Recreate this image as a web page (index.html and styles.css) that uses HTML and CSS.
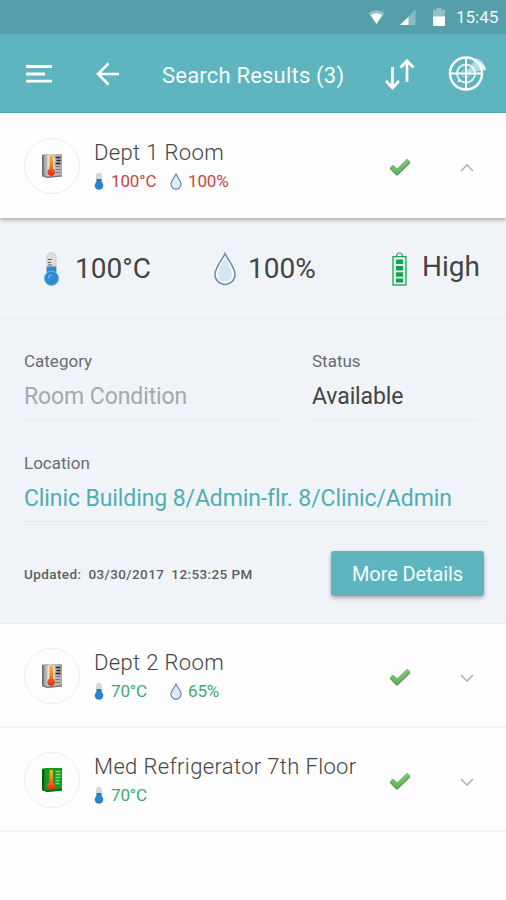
FILE: index.html
```html
<!DOCTYPE html>
<html lang="en">
<head>
  <meta charset="UTF-8">
  <meta name="viewport" content="width=device-width, initial-scale=1.0">
  <title>Search Results</title>
  <link rel="stylesheet" href="styles.css">
</head>
<body>
  <!-- Shared icons -->
  <svg class="sprite" width="0" height="0" aria-hidden="true">
    <defs>
      <linearGradient id="metal" x1="0" x2="1">
        <stop offset="0" stop-color="#8a8a8a"/>
        <stop offset="0.35" stop-color="#d2d2d2"/>
        <stop offset="1" stop-color="#a8a8a8"/>
      </linearGradient>
      <linearGradient id="heat" x1="0" y1="0" x2="0" y2="1">
        <stop offset="0" stop-color="#f9b233"/>
        <stop offset="0.5" stop-color="#f47b20"/>
        <stop offset="1" stop-color="#e02615"/>
      </linearGradient>
      <linearGradient id="tick" x1="0" y1="0" x2="0" y2="1">
        <stop offset="0" stop-color="#7fca78"/>
        <stop offset="1" stop-color="#5bbb58"/>
      </linearGradient>
      <symbol id="thermo" viewBox="0 0 17 34">
        <path d="M4 4.5a4.5 4 0 0 1 9 0V20H4z" fill="#dadcde" stroke="#c3c8cc" stroke-width="0.8"/>
        <path d="M3.700 14.500h9.600v8H3.700z" fill="#2f86cd"/>
        <circle cx="8.500" cy="26.300" r="7.200" fill="#2f8ad2" stroke="#8dbce2" stroke-width="0.8"/>
        <path d="M5 7.5h4M5 10.5h3M5 13h4" stroke="#666" stroke-width="1"/>
        <path d="M5.500 26.500a3.500 3.500 0 0 1 3-3.500" fill="none" stroke="#7db9ea" stroke-width="1.200"/>
      </symbol>
      <symbol id="thermo-small" viewBox="0 0 10 17">
        <path d="M2.500 2.500a2.500 2.300 0 0 1 5 0V9h-5z" fill="#d3d9de" stroke="#b4bdc5" stroke-width="0.5"/>
        <path d="M2.500 6h5v5h-5z" fill="#41729d"/>
        <circle cx="5" cy="12.500" r="4.300" fill="#2583cf"/>
      </symbol>
      <symbol id="drop" viewBox="0 0 22 34">
        <path d="M11 1.5C9 7 1 15 1 22.5a10 10 0 0 0 20 0C21 15 13 7 11 1.5z" fill="#f3f8fc" stroke="#5f8eb2" stroke-width="1.500"/>
        <path d="M11 6C9 11 4 17 4 22.5c0 3 2 5.500 4 6.500 6 1 9-2 10-6C18 17 13 11 11 6z" fill="#d5e5f2"/>
      </symbol>
      <symbol id="drop-small" viewBox="0 0 12 17">
        <path d="M6 1C5 4 1 7.500 1 11.200a5 5 0 0 0 10 0C11 7.500 7 4 6 1z" fill="#dce9f7" stroke="#6488b8" stroke-width="1.200"/>
        <path d="M3.200 11.500a3 3 0 0 0 3 3" fill="none" stroke="#fff" stroke-width="1"/>
      </symbol>
      <symbol id="battery" viewBox="0 0 15 34">
        <path d="M4.500 4.500C4.500 2 6 1 7.500 1s3 1 3 3.500" fill="#fff" stroke="#3a9a68" stroke-width="1.200"/>
        <rect x="1" y="4.600" width="13" height="28.400" fill="#d9f5e5" stroke="#20a25c" stroke-width="1.300"/>
        <path d="M4 7.500h7v4.500H4zM4 14h7v4.500H4zM4 20.300h7v4.500H4zM4 26.500h7v4H4z" fill="#16a150"/>
      </symbol>
      <symbol id="check" viewBox="0 0 22 18">
        <path d="M1 9.500L4 7l4.200 3.700L18 1l3 2.500v2L8.500 17.500H7.300L1 11z" fill="#62965a"/>
        <path d="M1 9.500L4 7l4.200 3.700L18 1l3 2.500L8 16z" fill="url(#tick)"/>
      </symbol>
      <symbol id="chevron" viewBox="0 0 14 8">
        <path d="M1 1l6 6 6-6" fill="none" stroke="#aaa" stroke-width="1.300"/>
      </symbol>
      <symbol id="sensor" viewBox="0 0 22 26">
        <path d="M1 2l4-1h16v22.500L6 25l-5-2z" fill="url(#metal)"/>
        <path d="M1 2l1.500-.4V23.600L1 23z" fill="#6d6d6d"/>
        <path d="M1 23l5 2 15-1.500v-1.300L6 23.500l-5-1.800z" fill="#777"/>
        <rect x="6.500" y="3" width="7" height="18" fill="#e8e4df"/>
        <path d="M14.500 4.500h5M15.500 7.500h4M14.500 10.500h5" stroke="#222" stroke-width="1.700"/>
        <path d="M14.500 13.500h4M14.500 16.500h4M14.500 19.500h4" stroke="#777" stroke-width="1.200"/>
        <path d="M8.500 3H12v12.500a3.900 3.900 0 1 1-3.500 0z" fill="url(#heat)"/>
      </symbol>
      <symbol id="fridge" viewBox="0 0 22 26">
        <path d="M1 2l4-1h16v22.500L6 25l-5-2z" fill="#159a20"/>
        <path d="M1 2l2.500-.6V24L1 23z" fill="#0b5c13"/>
        <path d="M1 23l5 2 15-1.500v-2L6 23z" fill="#0c6a15"/>
        <path d="M14.500 4.500h5M14.500 7.500h5M14.500 10.500h5M14.500 13.500h4M14.500 16.500h4" stroke="#79dc7c" stroke-width="1.400"/>
        <path d="M8.500 3H12v12.500a3.900 3.900 0 1 1-3.500 0z" fill="url(#heat)"/>
      </symbol>
    </defs>
  </svg>

  <div class="status-bar">
    <svg class="wifi" viewBox="0 0 18 16">
      <path d="M.5 4A13 13 0 0 1 17.500 4L9 15.500z" fill="#8fc2c9"/>
      <path d="M3 6.200a10 10 0 0 1 12 0L9 15.500z" fill="#fff"/>
    </svg>
    <svg class="signal" viewBox="0 0 17 17">
      <path d="M16.500 0v16.500H0z" fill="#86bbc3"/>
      <path d="M9 8v8.500H0z" fill="#fff"/>
    </svg>
    <svg class="power" viewBox="0 0 12 18">
      <path d="M3.500 0h5v2H12v7H0V2h3.500z" fill="#8fc2c9"/>
      <path d="M0 8.500h12v8.500a1 1 0 0 1-1 1H1a1 1 0 0 1-1-1z" fill="#fff"/>
    </svg>
    <span class="clock">15:45</span>
  </div>

  <header class="app-bar">
    <svg class="menu" viewBox="0 0 26 18">
      <path d="M0 1.500h26M0 9h19M0 16.200h26" stroke="#fff" stroke-width="2.800"/>
    </svg>
    <svg class="back" viewBox="0 0 24 24">
      <path d="M23 12H2M12.500 1.500L2 12l10.500 10.500" fill="none" stroke="#fff" stroke-width="2.600"/>
    </svg>
    <h1 class="title">Search Results (3)</h1>
    <svg class="sort" viewBox="0 0 30 31">
      <path d="M7.500 8v20.500M1 22l6.500 7L14 22M22 23V2.500M15.500 8.500L22 1.800l6.500 6.700" fill="none" stroke="#fff" stroke-width="2.700"/>
    </svg>
    <svg class="radar" viewBox="0 0 40 36">
      <path d="M18 18L28 3q8 2 10 12z" fill="#fff" opacity="0.500"/>
      <path d="M31 6q6 3 7 9l-5 1z" fill="#fff" opacity="0.600"/>
      <g fill="none" stroke="#fff">
        <circle cx="18" cy="18.500" r="16" stroke-width="2.400"/>
        <circle cx="18" cy="18.500" r="9" stroke-width="1.900" opacity="0.850"/>
        <circle cx="18" cy="18.500" r="4" stroke-width="1.200" opacity="0.500"/>
        <path d="M18 2.500v32M2 18.500h32" stroke-width="2"/>
      </g>
      <circle cx="11" cy="26" r="1.300" fill="#fff"/>
    </svg>
  </header>

  <main class="results">
    <div class="row row-open">
      <div class="avatar"><svg class="device"><use href="#sensor"/></svg></div>
      <div class="info">
        <div class="name">Dept 1 Room</div>
        <div class="readings alert">
          <span class="reading"><svg class="thermo-small"><use href="#thermo-small"/></svg>100°C</span>
          <span class="reading"><svg class="drop-small"><use href="#drop-small"/></svg>100%</span>
        </div>
      </div>
      <svg class="check"><use href="#check"/></svg>
      <svg class="chevron up"><use href="#chevron"/></svg>
    </div>

    <section class="details">
      <div class="stats">
        <div class="stat"><svg class="thermo"><use href="#thermo"/></svg>100°C</div>
        <div class="stat"><svg class="drop"><use href="#drop"/></svg>100%</div>
        <div class="stat level"><svg class="battery"><use href="#battery"/></svg><span>High</span></div>
      </div>
      <div class="fields">
        <div class="field">
          <div class="label">Category</div>
          <div class="value muted">Room Condition</div>
        </div>
        <div class="field">
          <div class="label">Status</div>
          <div class="value">Available</div>
        </div>
        <div class="field wide">
          <div class="label">Location</div>
          <div class="value link">Clinic Building 8/Admin-flr. 8/Clinic/Admin</div>
        </div>
      </div>
      <div class="actions">
        <div class="updated"><span>Updated:</span><span>03/30/2017</span><span>12:53:25 PM</span></div>
        <button class="button">More Details</button>
      </div>
    </section>

    <div class="row">
      <div class="avatar"><svg class="device"><use href="#sensor"/></svg></div>
      <div class="info">
        <div class="name">Dept 2 Room</div>
        <div class="readings">
          <span class="reading"><svg class="thermo-small"><use href="#thermo-small"/></svg>70°C</span>
          <span class="reading"><svg class="drop-small"><use href="#drop-small"/></svg>65%</span>
        </div>
      </div>
      <svg class="check"><use href="#check"/></svg>
      <svg class="chevron"><use href="#chevron"/></svg>
    </div>

    <div class="row">
      <div class="avatar"><svg class="device"><use href="#fridge"/></svg></div>
      <div class="info">
        <div class="name">Med Refrigerator 7th Floor</div>
        <div class="readings">
          <span class="reading"><svg class="thermo-small"><use href="#thermo-small"/></svg>70°C</span>
        </div>
      </div>
      <svg class="check"><use href="#check"/></svg>
      <svg class="chevron"><use href="#chevron"/></svg>
    </div>
  </main>
</body>
</html>
```
FILE: styles.css
```css
* {
  box-sizing: border-box;
}
body {
  margin: 0;
  min-height: 900px;
  background-color: #fefefe;
  color: #444;
  font-family: Roboto, "Liberation Sans", sans-serif;
}
svg {
  display: block;
  flex-shrink: 0;
}
.sprite {
  height: 0;
}
.status-bar {
  display: flex;
  align-items: center;
  height: 34px;
  padding-left: 368px;
  background-color: #549fa9;
}
.wifi {
  width: 17px;
  height: 16px;
}
.signal {
  width: 16px;
  height: 17px;
  margin-left: 15px;
}
.power {
  width: 12px;
  height: 18px;
  margin: 0 11px 0 17px;
}
.clock {
  color: #eefafb;
  font-size: 17px;
  font-weight: 400;
  line-height: 34px;
}
.app-bar {
  display: flex;
  align-items: center;
  height: 79px;
  padding: 2px 18px 0 26px;
  background-color: #5fb5bf;
  border-bottom: 1px solid #50a7b1;
}
.menu {
  width: 26px;
  height: 18px;
}
.back {
  width: 24px;
  height: 24px;
  margin-left: 44px;
}
.title {
  flex: 1;
  margin: 3px 0 0 42px;
  color: #f4fcfc;
  font-size: 22px;
  font-weight: 400;
  line-height: 28px;
  letter-spacing: 0.2px;
}
.sort {
  width: 30px;
  height: 31px;
}
.radar {
  width: 40px;
  height: 36px;
  margin: -2px 0 0 33px;
}
.row {
  display: flex;
  align-items: center;
  height: 104px;
  padding: 1px 32px 0 24px;
  border-bottom: 2px solid #f3f4f5;
  background-color: #fefefe;
}
.row-open {
  position: relative;
  height: 105px;
  padding-top: 0;
  border-bottom: none;
  box-shadow: 0 2px 4px rgba(0, 0, 0, 0.3);
}
.avatar {
  display: flex;
  align-items: center;
  justify-content: center;
  width: 56px;
  height: 56px;
  border: 1px solid #ececec;
  border-radius: 50%;
}
.device {
  width: 22px;
  height: 26px;
}
.info {
  flex: 1;
  margin-left: 14px;
}
.name {
  margin-bottom: 3px;
  font-size: 22px;
  font-weight: 300;
  line-height: 28px;
  letter-spacing: 0.35px;
}
.readings {
  display: flex;
  color: #3fa871;
  font-size: 17px;
  line-height: 22px;
  letter-spacing: -0.15px;
}
.alert {
  color: #c5483f;
}
.reading {
  display: flex;
  align-items: center;
  width: 76px;
}
.thermo-small {
  width: 10px;
  height: 17px;
  margin-right: 7px;
}
.drop-small {
  width: 12px;
  height: 17px;
  margin-right: 6px;
}
.check {
  width: 22px;
  height: 18px;
  margin-top: 2px;
}
.chevron {
  width: 14px;
  height: 8px;
  margin: 4px 0 0 49px;
}
.up {
  transform: rotate(180deg);
}
.details {
  height: 406px;
  background-color: #f0f4f8;
  border-bottom: 1px solid #e6eaed;
}
.stats {
  display: grid;
  grid-template-columns: 171px 178px 1fr;
  height: 102px;
  padding-left: 43px;
  border-bottom: 1px solid #e9eef2;
}
.stat {
  display: flex;
  align-items: center;
  font-size: 28px;
  line-height: 34px;
}
.thermo {
  width: 17px;
  height: 34px;
  margin-right: 15px;
}
.drop {
  width: 22px;
  height: 34px;
  margin-right: 12px;
}
.battery {
  width: 15px;
  height: 34px;
  margin-right: 15px;
}
.level span {
  margin-bottom: 4px;
}
.fields {
  display: grid;
  grid-template-columns: 257px 167px;
  column-gap: 31px;
  row-gap: 32px;
  padding: 30px 0 0 24px;
}
.field {
  height: 70px;
  border-bottom: 1px solid #e4e9ed;
}
.wide {
  grid-column: 1 / 3;
  margin-right: -11px;
}
.label {
  margin-bottom: 11px;
  color: #686c70;
  font-size: 17px;
  line-height: 22px;
}
.value {
  font-size: 23px;
  line-height: 28px;
  letter-spacing: -0.1px;
  white-space: nowrap;
}
.muted {
  color: #a5a8ab;
}
.link {
  color: #52adb3;
}
.actions {
  display: flex;
  align-items: center;
  justify-content: space-between;
  margin-top: 29px;
  padding: 0 22px 0 24px;
}
.updated {
  display: flex;
  gap: 7px;
  color: #5c5f62;
  font-size: 13.5px;
  font-weight: 500;
  letter-spacing: 0.4px;
}
.button {
  width: 153px;
  height: 45px;
  padding: 0;
  background-color: #5fb5bf;
  border: none;
  border-radius: 3px;
  box-shadow: 0 2px 4px rgba(0, 0, 0, 0.3);
  color: #f4fcfc;
  font-family: inherit;
  font-size: 20px;
  letter-spacing: -0.1px;
}
```
